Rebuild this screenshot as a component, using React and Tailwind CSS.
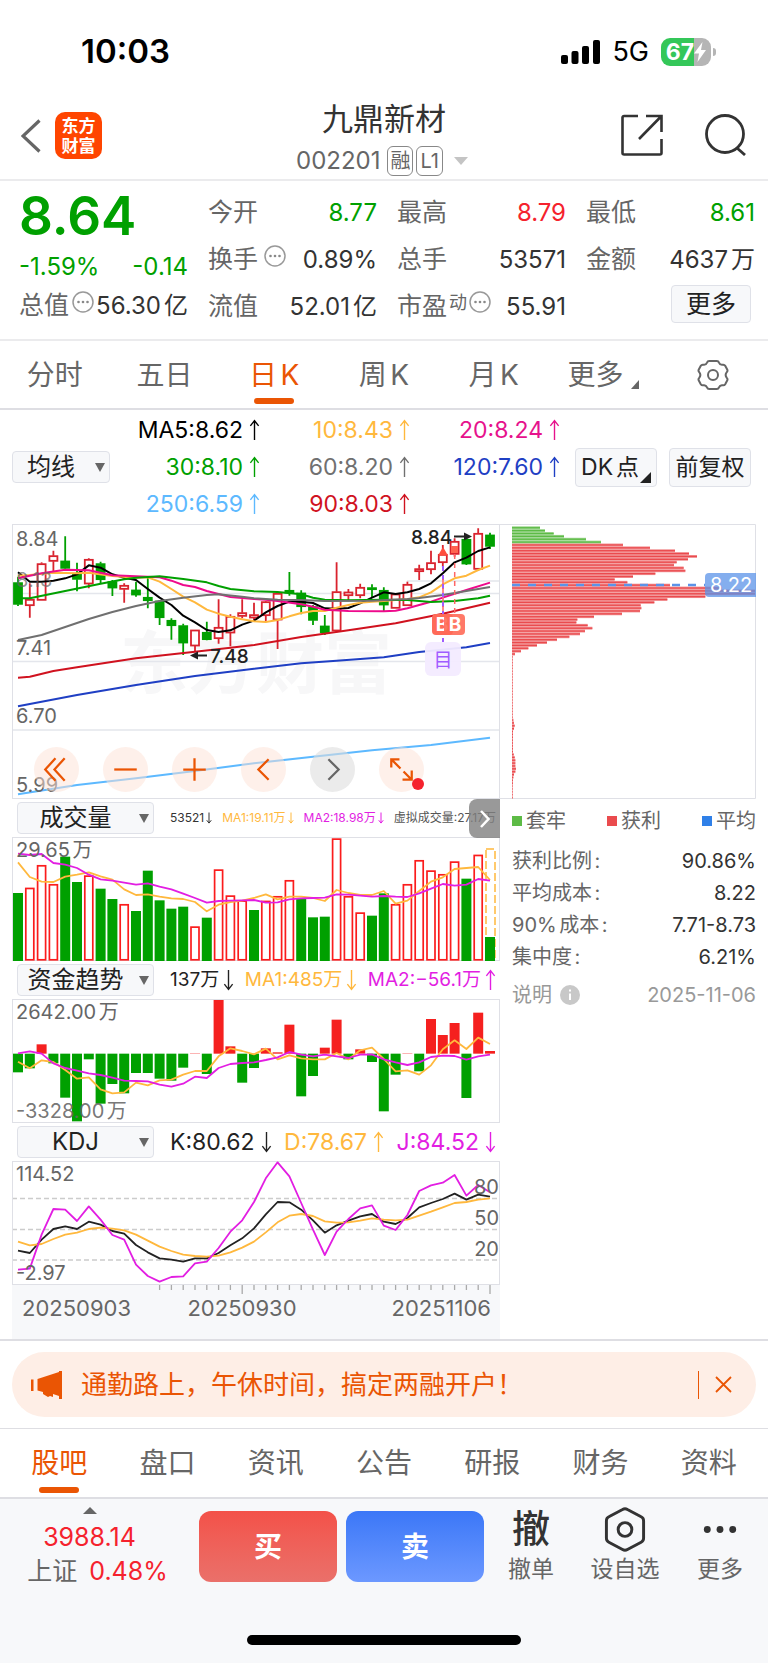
import React, { useState } from "react";

const UP = "#d9232e";
const DOWN = "#00a000";
const YELLOW = "#ffb83d";
const PURPLE = "#e21ee2";
const STEP = 11.8;

const xAt = (i) => 6 + i * STEP;

// [high, top, bottom, low, rising]
const candles = [
  [185, 203, 268, 273, 0], [205, 253, 272, 308, 1], [142, 146, 256, 256, 1], [107, 122, 139, 170, 1],
  [64, 138, 160, 163, 0], [143, 175, 193, 229, 0], [130, 133, 207, 220, 1], [140, 146, 194, 207, 0],
  [195, 200, 219, 243, 0], [205, 211, 223, 263, 1], [200, 225, 240, 245, 0], [183, 247, 257, 280, 0],
  [255, 258, 308, 330, 0], [310, 316, 332, 374, 0], [326, 332, 384, 420, 0], [345, 345, 393, 410, 1],
  [320, 352, 374, 376, 0], [253, 337, 371, 386, 1], [298, 304, 354, 394, 1], [253, 293, 304, 310, 1],
  [263, 299, 309, 315, 1], [258, 260, 302, 320, 1], [235, 235, 315, 402, 1], [171, 226, 234, 242, 0],
  [226, 234, 275, 298, 0], [270, 275, 316, 330, 0], [300, 333, 353, 360, 0], [142, 230, 348, 352, 1],
  [222, 231, 242, 258, 1], [206, 217, 242, 250, 1], [208, 218, 222, 247, 0], [217, 226, 270, 288, 0],
  [237, 237, 280, 280, 1], [200, 208, 272, 272, 1], [149, 161, 170, 195, 1], [107, 143, 164, 178, 1],
  [90, 118, 143, 155, 1], [70, 79, 118, 125, 1], [66, 73, 147, 150, 0], [40, 55, 163, 168, 1],
  [53, 60, 94, 102, 0],
];

const maLines = [
  { color: "#5db9ff", pts: [[0, 838], [5, 810], [10, 790], [15, 768], [20, 745], [25, 725], [30, 706], [35, 690], [40, 668]] },
  { color: "#1f3fc4", pts: [[0, 574], [5, 540], [10, 510], [15, 483], [20, 461], [24, 445], [27, 437], [31, 427], [34, 411], [38, 397], [40, 384]] },
  { color: "#d0121f", pts: [[0, 488], [1, 485], [3, 468], [5, 457], [10, 430], [15, 410], [18, 398], [20, 390], [24, 366], [28, 346], [32, 325], [36, 296], [40, 263]] },
  { color: "#000000", pts: [[0, 172], [1, 200], [2, 200], [3, 197], [4, 190], [5, 178], [6, 151], [7, 158], [8, 178], [9, 188], [10, 195], [11, 222], [12, 248], [13, 270], [14, 302], [15, 322], [16, 345], [17, 351], [18, 346], [19, 329], [20, 317], [21, 292], [22, 273], [23, 260], [24, 260], [25, 264], [26, 280], [27, 281], [28, 279], [29, 265], [30, 248], [31, 232], [32, 237], [33, 232], [34, 222], [35, 205], [36, 175], [37, 142], [38, 128], [39, 108], [40, 97]] },
  { color: YELLOW, pts: [[0, 182], [1, 180], [3, 173], [5, 175], [6, 173], [8, 183], [10, 188], [11, 187], [12, 200], [13, 222], [14, 245], [15, 262], [16, 284], [17, 296], [18, 305], [19, 313], [20, 319], [21, 321], [22, 315], [23, 304], [24, 294], [25, 288], [26, 288], [27, 278], [28, 270], [29, 263], [30, 260], [31, 258], [32, 255], [33, 253], [34, 247], [35, 232], [36, 208], [37, 190], [38, 182], [39, 165], [40, 152]] },
  { color: "#ee0a8c", pts: [[0, 190], [2, 175], [4, 164], [6, 166], [8, 181], [10, 184], [12, 187], [13, 197], [14, 210], [15, 216], [16, 228], [18, 246], [20, 252], [21, 254], [22, 258], [24, 268], [25, 275], [26, 284], [28, 288], [31, 289], [32, 287], [33, 280], [35, 260], [36, 248], [38, 225], [40, 203]] },
  { color: DOWN, pts: [[0, 250], [1, 250], [4, 228], [7, 206], [9, 193], [10, 188], [12, 184], [14, 192], [16, 202], [17, 213], [18, 222], [20, 229], [22, 231], [24, 238], [25, 248], [26, 254], [28, 256], [31, 254], [33, 255], [35, 261], [37, 258], [39, 250], [40, 242]] },
  { color: "#707070", pts: [[0, 375], [2, 360], [4, 336], [6, 312], [8, 291], [10, 273], [12, 258], [14, 248], [16, 240], [17, 238], [19, 245], [20, 250], [22, 254], [24, 255], [26, 258], [30, 257], [33, 252], [34, 249], [36, 240], [38, 228], [40, 216]] },
];

const volume = [295, 279, 211, 268, 186, 262, 242, 282, 313, 328, 349, 228, 317, 342, 336, 395, 369, 224, 302, 317, 346, 318, 304, 256, 311, 368, 366, 131, 304, 353, 363, 296, 328, 268, 196, 227, 238, 200, 252, 180];
const volumeUp = "0111001001000001011101110001110111111101";
const volumeMa1 = [203, 247, 261, 262, 246, 240, 233, 245, 255, 284, 301, 299, 306, 311, 313, 322, 350, 330, 322, 318, 310, 299, 314, 306, 306, 310, 319, 286, 295, 301, 301, 289, 327, 318, 289, 261, 248, 223, 220, 217, 256];
const volumeMa2 = [177, 181, 178, 205, 210, 220, 240, 254, 258, 264, 270, 266, 276, 284, 297, 310, 324, 319, 318, 317, 316, 324, 323, 314, 311, 310, 309, 299, 300, 303, 306, 304, 306, 307, 296, 282, 268, 273, 270, 253, 258];

const fund = [339, 327, 255, 312, 415, 486, 300, 433, 374, 402, 341, 341, 358, 364, 325, 282, 344, 122, 261, 370, 326, 267, 279, 196, 411, 350, 265, 181, 300, 270, 308, 456, 346, 282, 336, 179, 227, 191, 416, 160, 275];
const fundMa1 = [307, 327, 303, 308, 332, 358, 354, 390, 402, 399, 370, 378, 363, 361, 346, 335, 335, 291, 267, 275, 285, 268, 300, 288, 297, 300, 300, 281, 300, 273, 265, 299, 336, 333, 346, 318, 270, 243, 269, 235, 254];
const fundMa2 = [282, 276, 283, 312, 326, 334, 342, 347, 355, 364, 365, 366, 376, 382, 373, 352, 356, 326, 314, 311, 309, 302, 294, 278, 286, 291, 286, 291, 296, 286, 285, 300, 309, 317, 309, 293, 289, 290, 301, 291, 286];

const kLine = [393, 400, 360, 328, 320, 328, 306, 315, 334, 342, 376, 398, 416, 420, 426, 416, 416, 400, 377, 356, 326, 284, 247, 248, 270, 302, 339, 317, 303, 290, 283, 306, 313, 295, 263, 250, 238, 222, 240, 225, 231];
const dLine = [366, 377, 373, 358, 345, 339, 328, 324, 327, 332, 345, 363, 381, 394, 405, 409, 411, 408, 398, 384, 366, 338, 308, 288, 283, 289, 305, 309, 308, 303, 296, 300, 302, 300, 288, 276, 263, 250, 247, 240, 236];
const jLine = [450, 447, 345, 268, 270, 304, 260, 300, 346, 360, 435, 469, 486, 472, 470, 431, 426, 385, 336, 302, 247, 176, 128, 170, 250, 330, 406, 336, 298, 266, 257, 318, 331, 286, 214, 197, 189, 166, 228, 196, 218];

const chips = [
  84, 99, 125, 156, 222, 267, 333, 414, 489, 531, 555, 528, 494, 486, 515, 520, 430, 363, 308, 346,
  474, 630, 729, 729, 580, 466, 427, 386, 388, 384, 330, 246, 196, 193, 227, 241, 219, 204, 172, 135,
  105, 75, 49, 27, 9, 2, 2, 2, 2, 2, 2, 2, 2, 2, 2, 2, 2, 2, 2, 2, 2, 2, 2, 2, 2, 2, 2, 4, 6, 8, 6,
  3, 3, 3, 3, 3, 3, 3, 3, 5, 8, 10, 10, 10, 12, 10, 6, 4, 3, 3, 2, 2, 2, 2, 2,
];

const toPoints = (values, top) => values.map((v, i) => `${xAt(i)},${(v - top) / 3}`).join(" ");

function Line({ values, top, color }) {
  return <polyline points={toPoints(values, top)} fill="none" stroke={color} strokeWidth="1.8" strokeLinejoin="round" />;
}

function Frame({ height }) {
  return <rect x="0.5" y="0.5" width="487" height={height - 1} fill="none" stroke="#dfe0e6" />;
}

function Arrow({ down, small }) {
  return (
    <svg viewBox="0 0 12 24" className={small ? "h-3 w-[6px]" : "h-[22px] w-[11px]"} fill="none" stroke="currentColor" strokeWidth={small ? 2 : 1.5}>
      <path d={down ? "M6 1v21M1.5 16.5 6 22.2l4.5-5.7" : "M6 23V2M1.5 7.5 6 1.8l4.5 5.7"} />
    </svg>
  );
}

function Dots() {
  return (
    <svg viewBox="0 0 22 22" className="size-[22px] shrink-0" fill="none" stroke="#999">
      <circle cx="11" cy="11" r="10" strokeWidth="1.5" />
      <g fill="#888" stroke="none">
        <circle cx="6.5" cy="11" r="1.3" />
        <circle cx="11" cy="11" r="1.3" />
        <circle cx="15.5" cy="11" r="1.3" />
      </g>
    </svg>
  );
}

function Picker({ label, options, className }) {
  return (
    <div className={`relative ${className}`}>
      <select
        aria-label={label}
        className="h-8 w-full appearance-none rounded-sm border border-[#dfe1e8] bg-[#f7f8fa] pr-5 text-2xl leading-7 text-[#222] [text-align-last:center]"
      >
        {options.map((o) => (
          <option key={o}>{o}</option>
        ))}
      </select>
      <svg viewBox="0 0 10 9" className="pointer-events-none absolute top-3 right-[5px] h-[9px] w-[10px]" fill="#666">
        <path d="M0 0h10L5 9z" />
      </svg>
    </div>
  );
}

function StatusBar() {
  return (
    <div className="flex h-[100px] items-center justify-between pt-1 pr-[52px] pl-[81px]">
      <span className="text-[33px] font-semibold text-black">10:03</span>
      <div className="flex items-center gap-3">
        <svg viewBox="0 0 39 25" className="h-[25px] w-[39px]" fill="#000">
          <rect x="0" y="15" width="7" height="9" rx="2" />
          <rect x="10.5" y="11" width="7" height="13" rx="2" />
          <rect x="21" y="6" width="7" height="18" rx="2" />
          <rect x="32" y="0" width="7" height="24" rx="2" />
        </svg>
        <span className="text-[27px] text-black">5G</span>
        <div className="flex items-center gap-[2px]">
          <div className="flex h-7 w-[50px] items-center justify-center overflow-hidden rounded-[9px] bg-linear-to-r from-[#34c759] from-66% to-[#b5b5b5] to-66%">
            <span className="text-[23px] font-bold text-white">67</span>
            <svg viewBox="0 0 12 20" className="h-5 w-3" fill="#fff">
              <path d="M8.5 0 0 11.5h5L3.5 20 12 8H7z" />
            </svg>
          </div>
          <div className="h-2 w-[3px] rounded-r-full bg-[#b5b5b5]" />
        </div>
      </div>
    </div>
  );
}

function Header() {
  return (
    <header className="flex h-[81px] items-start justify-between border-b-2 border-[#ebebed] px-[21px]">
      <div className="flex flex-1 items-center gap-[14px] pt-3">
        <button aria-label="返回">
          <svg viewBox="0 0 20 34" className="h-[34px] w-5" fill="none" stroke="#666" strokeWidth="3.2">
            <path d="M18.5 1.5 2 17l16.5 15.5" />
          </svg>
        </button>
        <div className="flex size-[47px] flex-col items-center justify-center rounded-[10px] bg-[#ff4500] text-[17px] leading-5 font-bold text-white">
          <span>东方</span>
          <span>财富</span>
        </div>
      </div>
      <div className="flex flex-col items-center">
        <h1 className="text-[31px] leading-[38px] text-[#333]">九鼎新材</h1>
        <div className="flex h-[46px] items-center gap-[3px] pr-1 text-[#666]">
          <span className="pr-1 text-2xl">002201</span>
          <span className="rounded-md border border-[#888] px-[2px] text-xl leading-7">融</span>
          <span className="rounded-md border border-[#888] px-[3px] text-xl leading-7">L1</span>
          <svg viewBox="0 0 14 8" className="ml-2 h-2 w-[14px]" fill="#c4c4c4">
            <path d="M0 0h14L7 8z" />
          </svg>
        </div>
      </div>
      <div className="flex flex-1 items-center justify-end gap-[42px] pt-[14px]">
        <button aria-label="分享">
          <svg viewBox="0 0 42 42" className="size-[42px]" fill="none" stroke="#333" strokeWidth="2.6">
            <path d="M17 2H3.2C2 2 1.500 2.500 1.500 3.500v35.500c0 1 .5 1.500 1.700 1.500h35.600c1.200 0 1.700-.5 1.700-1.500V25M25 2h15.500v16M40 2.500 18 25" />
          </svg>
        </button>
        <button aria-label="搜索">
          <svg viewBox="0 0 42 42" className="size-[42px]" fill="none" stroke="#333" strokeWidth="2.8">
            <circle cx="20" cy="20" r="18.500" />
            <path d="m32 34 8 7" />
          </svg>
        </button>
      </div>
    </header>
  );
}

function Stat({ label, value, color = "text-[#333]", children }) {
  return (
    <div className="flex h-[47px] items-center justify-between whitespace-nowrap">
      <dt className="flex items-center gap-1 text-[25px] text-[#666]">
        {label}
        {children}
      </dt>
      <dd className={`text-2xl ${color}`}>{value}</dd>
    </div>
  );
}

function Quote() {
  return (
    <section className="grid h-[160px] grid-cols-4 gap-x-5 border-b-2 border-[#ebebed] pr-[13px] pl-[19px]">
      <div className="pt-[2px]">
        <p className="text-[53px] leading-[66px] font-semibold text-[#00a000]">8.64</p>
        <p className="flex justify-between text-2xl leading-9 text-[#00a000]">
          <span>-1.59%</span>
          <span>-0.14</span>
        </p>
        <div className="flex h-[42px] items-center justify-between whitespace-nowrap">
          <span className="flex shrink-0 items-center text-[25px] text-[#666]">
            总值
            <span className="pb-2 pl-[3px]"><Dots /></span>
          </span>
          <span className="text-2xl text-[#333]">56.30亿</span>
        </div>
      </div>
      <dl className="pt-2">
        <Stat label="今开" value="8.77" color="text-[#00a000]" />
        <Stat label="换手" value="0.89%">
          <span className="pb-2 pl-[2px]"><Dots /></span>
        </Stat>
        <Stat label="流值" value="52.01亿" />
      </dl>
      <dl className="pt-2">
        <Stat label="最高" value="8.79" color="text-[#f5222d]" />
        <Stat label="总手" value="53571" />
        <Stat label="市盈" value="55.91">
          <span className="-ml-[2px] flex gap-[2px] pb-2 text-lg leading-6">动<Dots /></span>
        </Stat>
      </dl>
      <div className="pt-2">
        <dl>
          <Stat label="最低" value="8.61" color="text-[#00a000]" />
          <Stat label="金额" value="4637万" />
        </dl>
        <div className="flex justify-end pt-[2px] pr-1">
          <button className="h-[38px] w-20 rounded-sm border border-[#dfe1e8] bg-[#f7f8fa] text-[25px] leading-8 text-[#222]">更多</button>
        </div>
      </div>
    </section>
  );
}

function PeriodTabs() {
  const [active, setActive] = useState("日K");
  return (
    <nav className="grid h-[69px] grid-cols-7 border-b-2 border-[#dedee3]">
      {["分时", "五日", "日K", "周K", "月K"].map((t) => (
        <button
          key={t}
          onClick={() => setActive(t)}
          className={`relative flex items-center justify-center text-[28px] ${active === t ? "text-[#ea5504]" : "text-[#666]"}`}
        >
          {t}
          {active === t && <span className="absolute bottom-1 h-[6px] w-10 rounded-sm bg-[#ea5504]" />}
        </button>
      ))}
      <button className="flex items-center justify-center gap-2 text-[28px] text-[#666]">
        更多
        <svg viewBox="0 0 8 9" className="mt-5 h-[9px] w-2" fill="#666">
          <path d="M8 0v9H0z" />
        </svg>
      </button>
      <button aria-label="设置" className="flex items-center justify-center">
        <svg viewBox="0 0 32 32" className="size-8" fill="none" stroke="#666" strokeWidth="2" strokeLinejoin="round">
          <path d="M12.200 2h7.600c1.200 0 1.800.6 2.200 1.700.7 1.800 1.700 2.400 3.600 2.100 1.200-.2 2 0 2.600 1l2 3.700c.6 1.100.4 1.800-.4 2.700-1.400 1.700-1.400 3.900 0 5.600.8.900 1 1.600.4 2.700l-2 3.700c-.6 1-1.400 1.200-2.600 1-1.900-.3-2.900.3-3.600 2.100-.4 1.100-1 1.700-2.200 1.700h-7.600c-1.200 0-1.800-.6-2.200-1.700-.7-1.800-1.700-2.400-3.600-2.100-1.200.2-2 0-2.600-1l-2-3.700c-.6-1.100-.4-1.800.4-2.700 1.400-1.700 1.400-3.900 0-5.600-.8-.9-1-1.600-.4-2.700l2-3.700c.6-1 1.400-1.200 2.600-1 1.900.3 2.900-.3 3.600-2.100C10.400 2.600 11 2 12.200 2z" />
          <circle cx="16" cy="16" r="5" />
        </svg>
      </button>
    </nav>
  );
}

function MaPanel() {
  const items = [
    ["MA5:8.62", "text-black"],
    ["10:8.43", "text-[#ffb83d]"],
    ["20:8.24", "text-[#e6128c]"],
    ["30:8.10", "text-[#00a000]"],
    ["60:8.20", "text-[#707070]"],
    ["120:7.60", "text-[#1f3fc4]"],
    ["250:6.59", "text-[#5db9ff]"],
    ["90:8.03", "text-[#d0121f]"],
  ];
  return (
    <section className="flex h-[114px] items-center pr-[17px] pl-3">
      <Picker label="主图指标" options={["均线", "BOLL"]} className="w-[98px]" />
      <div className="grid flex-1 grid-cols-3">
        {items.map(([text, color]) => (
          <span key={text} className={`flex h-[37px] items-center justify-end gap-[6px] text-[23px] ${color}`}>
            {text}
            <Arrow />
          </span>
        ))}
      </div>
      <div className="ml-[15px] flex gap-3">
        <button className="relative h-[39px] w-[82px] rounded-sm border border-[#dfe1e8] bg-[#f7f8fa] pr-3 text-[23px] leading-8 whitespace-nowrap text-[#222]">
          DK点
          <svg viewBox="0 0 11 11" className="absolute right-[5px] bottom-[3px] size-[11px]" fill="#222">
            <path d="M11 0v11H0z" />
          </svg>
        </button>
        <button className="h-[39px] w-[82px] rounded-sm border border-[#dfe1e8] bg-[#f7f8fa] text-[23px] leading-8 whitespace-nowrap text-[#222]">前复权</button>
      </div>
    </section>
  );
}

function CandleChart() {
  const y = (v) => v / 3 - 9;
  const tools = [
    ["最左", "M21 11 11 22l10 11M30 11 20 22l10 11"],
    ["缩小", "M11 22h22"],
    ["放大", "M11 22h22M22 11v22"],
    ["左移", "M27 12 17 22l10 10"],
    ["右移", "M18 12l10 10-10 10"],
    ["全屏", "M12 20v-8h8M12 12l9 9M32 23v9h-9M32 32l-8-8"],
  ];
  return (
    <div className="relative">
      <svg viewBox="0 0 488 275" className="block w-full">
        <text x="108" y="164" fontSize="68" fontWeight="700" fill="#f7f7f8">东方财富</text>
        <g stroke="#e4e6ec" strokeWidth="1.5">
          <path d="M0 69.500h488M0 137.500h488M0 206h488M395 57h93" />
        </g>
        <Frame height={275} />
        {candles.map(([h, t, b, l, up], i) => (
          <g key={i} stroke={up ? UP : DOWN} fill={up ? "#fff" : DOWN} strokeWidth="1.8">
            <path d={`M${xAt(i)} ${y(h)}V${y(t)}M${xAt(i)} ${y(b)}V${y(l)}`} />
            <rect x={xAt(i) - 4} y={y(t) + 0.5} width="8" height={Math.max((b - t) / 3 - 1, 1)} />
          </g>
        ))}
        {maLines.map(({ color, pts }) => (
          <polyline
            key={color}
            points={pts.map(([i, v]) => `${xAt(i)},${y(v)}`).join(" ")}
            fill="none"
            stroke={color}
            strokeWidth="2"
            strokeLinejoin="round"
          />
        ))}
        <g fontSize="20" fill="#666">
          <text x="4" y="22">8.84</text>
          <text x="4" y="63" fillOpacity="0.7">8.13</text>
          <text x="4" y="131">7.41</text>
          <text x="4" y="199">6.70</text>
          <text x="4" y="268">5.99</text>
        </g>
        <g fontSize="19" fontWeight="500" fill="#222">
          <text x="198" y="139">7.48</text>
          <text x="399" y="20">8.84</text>
          <path d="M178 131.500l8-4v3h9v2h-9v3zM460 12.500l-8-4v3h-10v2h10v3z" />
        </g>
        <path d="M431 42v76" stroke="#a05cff" strokeWidth="2" strokeDasharray="5 4" />
        <path d="M442.700 30v60M431 55v35" stroke="#f66" strokeWidth="1.5" strokeDasharray="5 4" />
        <path d="M426 31.500 431 23l5 8.500z" fill="#ff4d3d" />
        <rect x="439" y="22" width="7" height="7" fill="#ff6450" />
        <rect x="413" y="118" width="36" height="34" rx="6" fill="#f3ebff" fillOpacity="0.95" />
        <text x="431" y="143" fontSize="19" textAnchor="middle" fill="#a05cff">目</text>
        <g fontSize="19" fontWeight="700" fill="#fff" textAnchor="middle">
          <rect x="420" y="90" width="21" height="21" rx="4" fill="#ff6a58" />
          <text x="430" y="107">B</text>
          <rect x="432" y="90" width="21" height="21" rx="4" fill="#ff6a58" fillOpacity="0.9" />
          <text x="443" y="107">B</text>
        </g>
      </svg>
      <div className="absolute bottom-[7px] left-[22px] flex gap-6">
        {tools.map(([name, d], i) => (
          <button key={name} aria-label={name} className={`relative size-[45px] rounded-full ${i === 4 ? "bg-[#dedede]/60 text-[#666]" : "bg-[#fde2d5]/50 text-[#ea5504]"}`}>
            <svg viewBox="0 0 44 44" className="size-full" fill="none" stroke="currentColor" strokeWidth="2.2">
              <path d={d} />
            </svg>
            {i === 5 && <span className="absolute right-0 bottom-[2px] size-3 rounded-full bg-[#f5222d]" />}
          </button>
        ))}
      </div>
    </div>
  );
}

function VolumeChart() {
  return (
    <svg viewBox="0 0 488 124" className="block w-full">
      <Frame height={124} />
      {volume.map((v, i) => {
        const top = (v - 127) / 3;
        return volumeUp[i] === "1" && i !== 30 && i !== 31 ? (
          <rect key={i} x={xAt(i) - 4} y={top + 0.8} width="8" height={122 - top} fill="#fff" stroke="#fb1c1c" strokeWidth="1.7" />
        ) : (
          <rect key={i} x={xAt(i) - 5} y={top} width="10" height={124 - top} fill={DOWN} />
        );
      })}
      <rect x="474" y="12" width="9" height="111" fill="none" stroke={YELLOW} strokeWidth="1.5" strokeDasharray="8 3" />
      <rect x="473" y="100" width="10" height="24" fill={DOWN} />
      <Line values={volumeMa1} top={127} color={YELLOW} />
      <Line values={volumeMa2} top={127} color={PURPLE} />
      <text x="4" y="20" fontSize="20" fill="#666">29.65万</text>
    </svg>
  );
}

function FundChart() {
  return (
    <svg viewBox="0 0 488 124" className="block w-full">
      <Frame height={124} />
      {fund.map((v, i) => (
        <rect
          key={i}
          x={xAt(i) - 5}
          y={(Math.min(v, 283) - 119) / 3}
          width="10"
          height={Math.abs(v - 283) / 3}
          fill={v < 283 ? "#f5201f" : DOWN}
        />
      ))}
      <Line values={fundMa1} top={119} color={YELLOW} />
      <Line values={fundMa2} top={119} color={PURPLE} />
      <g fontSize="20" fill="#666">
        <text x="4" y="20">2642.00万</text>
        <text x="4" y="119" fillOpacity="0.9">-3328.00万</text>
      </g>
    </svg>
  );
}

function KdjChart() {
  const ticks = Array.from({ length: 29 }, (_, n) => n + 12);
  return (
    <svg viewBox="0 0 488 178" className="block w-full">
      <rect x="0" y="123" width="488" height="55" fill="#f7f8fa" />
      <path d="M0 37.500h488M0 68.500h488M0 99h488" stroke="#ccc" strokeWidth="1.500" strokeDasharray="5 3" />
      <Frame height={124} />
      <Line values={kLine} top={124} color="#222" />
      <Line values={dLine} top={124} color={YELLOW} />
      <Line values={jLine} top={124} color={PURPLE} />
      <path d={ticks.map((i) => `M${xAt(i)} 124v${i === 19 || i === 40 ? 9 : 5}`).join("")} stroke="#aaa" strokeWidth="1.300" />
      <g fontSize="20" fill="#666">
        <text x="4" y="20">114.52</text>
        <text x="4" y="119">-2.97</text>
        <text x="487" y="33" textAnchor="end">80</text>
        <text x="487" y="64" textAnchor="end">50</text>
        <text x="487" y="95" textAnchor="end">20</text>
      </g>
      <g fontSize="22" fill="#666">
        <text x="10" y="155">20250903</text>
        <text x="230" y="155" textAnchor="middle">20250930</text>
        <text x="479" y="155" textAnchor="end">20251106</text>
      </g>
    </svg>
  );
}

function ChipPanel() {
  const rows = [
    ["获利比例:", "90.86%"],
    ["平均成本:", "8.22"],
    ["90%成本:", "7.71-8.73"],
    ["集中度:", "6.21%"],
  ];
  return (
    <aside>
      <svg viewBox="0 0 256 275" className="block w-full">
        <path d="M0 .5h255.500v274H0" fill="none" stroke="#dfe0e6" />
        {chips.map((w, i) => {
          const top = 3.700 + i * 2.870;
          return (
            <g key={i} fill={i < 6 ? "#5dbb46" : "#ea4b4e"}>
              <rect x="12" y={top - 1.400} width={w / 3} height="2.870" opacity="0.6" />
              <rect x="12" y={top - 0.600} width={w / 3} height="1.300" />
            </g>
          );
        })}
        <path d="M12 61h193" stroke="#5b93e8" strokeWidth="2.500" strokeDasharray="8 8" />
        <path d="M205 53a4 4 0 0 1 4-4h47v24h-47a4 4 0 0 1-4-4z" fill="#5b93e8" fillOpacity="0.75" />
        <text x="210" y="68" fontSize="20" fill="#fff">8.22</text>
      </svg>
      <div className="pl-3 text-xl text-[#666]">
        <div className="flex h-11 items-center justify-between">
          <span className="flex items-center gap-1"><i className="size-[10px] bg-[#5dbb46]" />套牢</span>
          <span className="flex items-center gap-1"><i className="size-[10px] bg-[#ea4b4e]" />获利</span>
          <span className="flex items-center gap-1"><i className="size-[10px] bg-[#2f80e8]" />平均</span>
        </div>
        <dl className="pt-[2px]">
          {rows.map(([k, v]) => (
            <div key={k} className="flex h-8 items-center justify-between">
              <dt>{k}</dt>
              <dd className="text-[#333]">{v}</dd>
            </div>
          ))}
        </dl>
        <div className="flex h-11 items-center justify-between text-[#999]">
          <span className="flex items-center gap-2">
            说明
            <svg viewBox="0 0 20 20" className="size-5">
              <circle cx="10" cy="10" r="10" fill="#c8c8c8" />
              <path d="M10 8.500v6.500M10 4.500v2" stroke="#fff" strokeWidth="2" />
            </svg>
          </span>
          <span>2025-11-06</span>
        </div>
      </div>
    </aside>
  );
}

function Charts() {
  return (
    <section className="grid grid-cols-[minmax(0,61fr)_minmax(0,32fr)] border-b-2 border-[#dedee3] px-3">
      <div>
        <CandleChart />
        <div className="relative flex h-[38px] items-center pl-[5px]">
          <Picker label="副图一" options={["成交量", "成交额"]} className="w-[137px]" />
          <div className="flex flex-1 items-center justify-between pr-1 pl-4 text-xs whitespace-nowrap [text-autospace:no-autospace]">
            <span className="flex items-center gap-[2px] text-[#333]">53521<Arrow down small /></span>
            <span className="flex items-center gap-[2px] text-[#ffb83d]">MA1:19.11万<Arrow down small /></span>
            <span className="flex items-center gap-[2px] text-[#e21ee2]">MA2:18.98万<Arrow down small /></span>
            <span className="text-[#555]">虚拟成交量:27.17万</span>
          </div>
          <button aria-label="展开" className="absolute top-0 right-0 flex h-[39px] w-[31px] items-center justify-center rounded-l-lg bg-[#808080]/80">
            <svg viewBox="0 0 10 20" className="h-5 w-[10px]" fill="none" stroke="#fff" strokeWidth="2.500">
              <path d="m1 2 7.500 8L1 18" />
            </svg>
          </button>
        </div>
        <VolumeChart />
        <div className="flex h-[38px] items-center pl-[5px]">
          <Picker label="副图二" options={["资金趋势", "主力资金"]} className="w-[137px]" />
          <div className="flex flex-1 items-center justify-between pr-1 pl-4 text-[19px] whitespace-nowrap [text-autospace:no-autospace]">
            <span className="flex items-center gap-1 text-[#222]">137万<Arrow down /></span>
            <span className="flex items-center gap-1 text-[#ffb83d]">MA1:485万<Arrow down /></span>
            <span className="flex items-center gap-1 text-[#e21ee2]">MA2:−56.1万<Arrow /></span>
          </div>
        </div>
        <FundChart />
        <div className="flex h-[38px] items-center pl-[5px]">
          <Picker label="副图三" options={["KDJ", "MACD"]} className="w-[137px]" />
          <div className="flex flex-1 items-center justify-between pr-1 pl-4 text-[23px] whitespace-nowrap">
            <span className="flex items-center gap-[6px] text-[#222]">K:80.62<Arrow down /></span>
            <span className="flex items-center gap-[6px] text-[#ffb83d]">D:78.67<Arrow /></span>
            <span className="flex items-center gap-[6px] text-[#e21ee2]">J:84.52<Arrow down /></span>
          </div>
        </div>
        <KdjChart />
      </div>
      <ChipPanel />
    </section>
  );
}

function Banner() {
  const [open, setOpen] = useState(true);
  if (!open) return null;
  return (
    <div className="border-b border-[#dedee3] px-3 py-[11px]">
      <div className="flex h-[65px] items-center rounded-full bg-[#feeee6] pr-6 pl-[19px] text-[#ea5504]">
        <svg viewBox="0 0 32 28" className="h-7 w-8" fill="currentColor">
          <path d="M0 8.500h2.500V20H0zM6.500 8 28 1V0h3v28h-3v-3l-6-2v3l-3-1-2 1-5-3v-2l-5.500-1.500z" />
        </svg>
        <p className="flex-1 pl-[18px] text-[26px] whitespace-nowrap">通勤路上，午休时间，搞定两融开户！</p>
        <span className="mr-4 h-7 w-px bg-[#ea5504]" />
        <button aria-label="关闭" onClick={() => setOpen(false)}>
          <svg viewBox="0 0 17 17" className="size-[17px]" fill="none" stroke="currentColor" strokeWidth="1.800">
            <path d="m1 1 15 15M16 1 1 16" />
          </svg>
        </button>
      </div>
    </div>
  );
}

function InfoTabs() {
  const [active, setActive] = useState("股吧");
  return (
    <nav className="grid h-[70px] grid-cols-7 border-b-2 border-[#dedee3] px-[5px]">
      {["股吧", "盘口", "资讯", "公告", "研报", "财务", "资料"].map((t) => (
        <button
          key={t}
          onClick={() => setActive(t)}
          className={`relative flex items-center justify-center text-[28px] ${active === t ? "text-[#ea5504]" : "text-[#666]"}`}
        >
          {t}
          {active === t && <span className="absolute bottom-1 h-[6px] w-10 rounded-sm bg-[#ea5504]" />}
        </button>
      ))}
    </nav>
  );
}

function BottomBar() {
  return (
    <footer className="bg-[#f7f8fa] pb-[18px]">
      <div className="flex h-[136px] items-start">
        <a href="#index" className="flex w-[199px] flex-col items-center pt-2 pr-5 text-[25px] text-[#f5222d]">
          <svg viewBox="0 0 14 7" className="h-[7px] w-[14px]" fill="#666">
            <path d="M0 7h14L7 0z" />
          </svg>
          <span className="pt-[6px] leading-[34px]">3988.14</span>
          <span className="flex items-center gap-3 pl-4 leading-[34px]">
            <span className="text-[#666]">上证</span>0.48%
          </span>
        </a>
        <div className="flex flex-1 gap-[9px] pt-3">
          <button className="h-[71px] flex-1 rounded-xl bg-linear-to-b from-[#f35149] to-[#ea706a] text-[28px] font-bold text-white">买</button>
          <button className="h-[71px] flex-1 rounded-xl bg-linear-to-b from-[#3b77f7] to-[#6c98ff] text-[28px] font-bold text-white">卖</button>
        </div>
        <div className="flex pt-2 text-[23px] leading-[34px] text-[#666]">
          <button className="flex w-[94px] flex-col items-center">
            <span className="h-[45px] text-[38px] leading-[42px] font-medium text-[#333]">撤</span>
            撤单
          </button>
          <button className="flex w-[94px] flex-col items-center">
            <svg viewBox="0 0 42 46" className="h-[45px] w-[42px]" fill="none" stroke="#333" strokeWidth="3" strokeLinejoin="round">
              <path d="M18.500 2.500a5 5 0 0 1 5 0l14 7.500a4.500 4.500 0 0 1 2.500 4v18a4.500 4.500 0 0 1-2.500 4l-14 7.500a5 5 0 0 1-5 0L4.500 36A4.500 4.500 0 0 1 2 32V14a4.500 4.500 0 0 1 2.500-4z" />
              <circle cx="21" cy="23" r="7" />
            </svg>
            设自选
          </button>
          <button className="flex w-24 flex-col items-center">
            <svg viewBox="0 0 34 46" className="h-[45px] w-[34px]" fill="#333">
              <circle cx="4" cy="23" r="3.500" />
              <circle cx="17" cy="23" r="3.500" />
              <circle cx="30" cy="23" r="3.500" />
            </svg>
            更多
          </button>
        </div>
      </div>
      <div className="mx-auto h-[10px] w-[274px] rounded-full bg-black" />
    </footer>
  );
}

function App() {
  return (
    <div className="min-h-screen bg-white font-['Inter','Noto_Sans_CJK_SC',sans-serif] [text-autospace:normal]" lang="zh-CN">
      <StatusBar />
      <Header />
      <Quote />
      <PeriodTabs />
      <MaPanel />
      <Charts />
      <Banner />
      <InfoTabs />
      <BottomBar />
    </div>
  );
}

export default App;
